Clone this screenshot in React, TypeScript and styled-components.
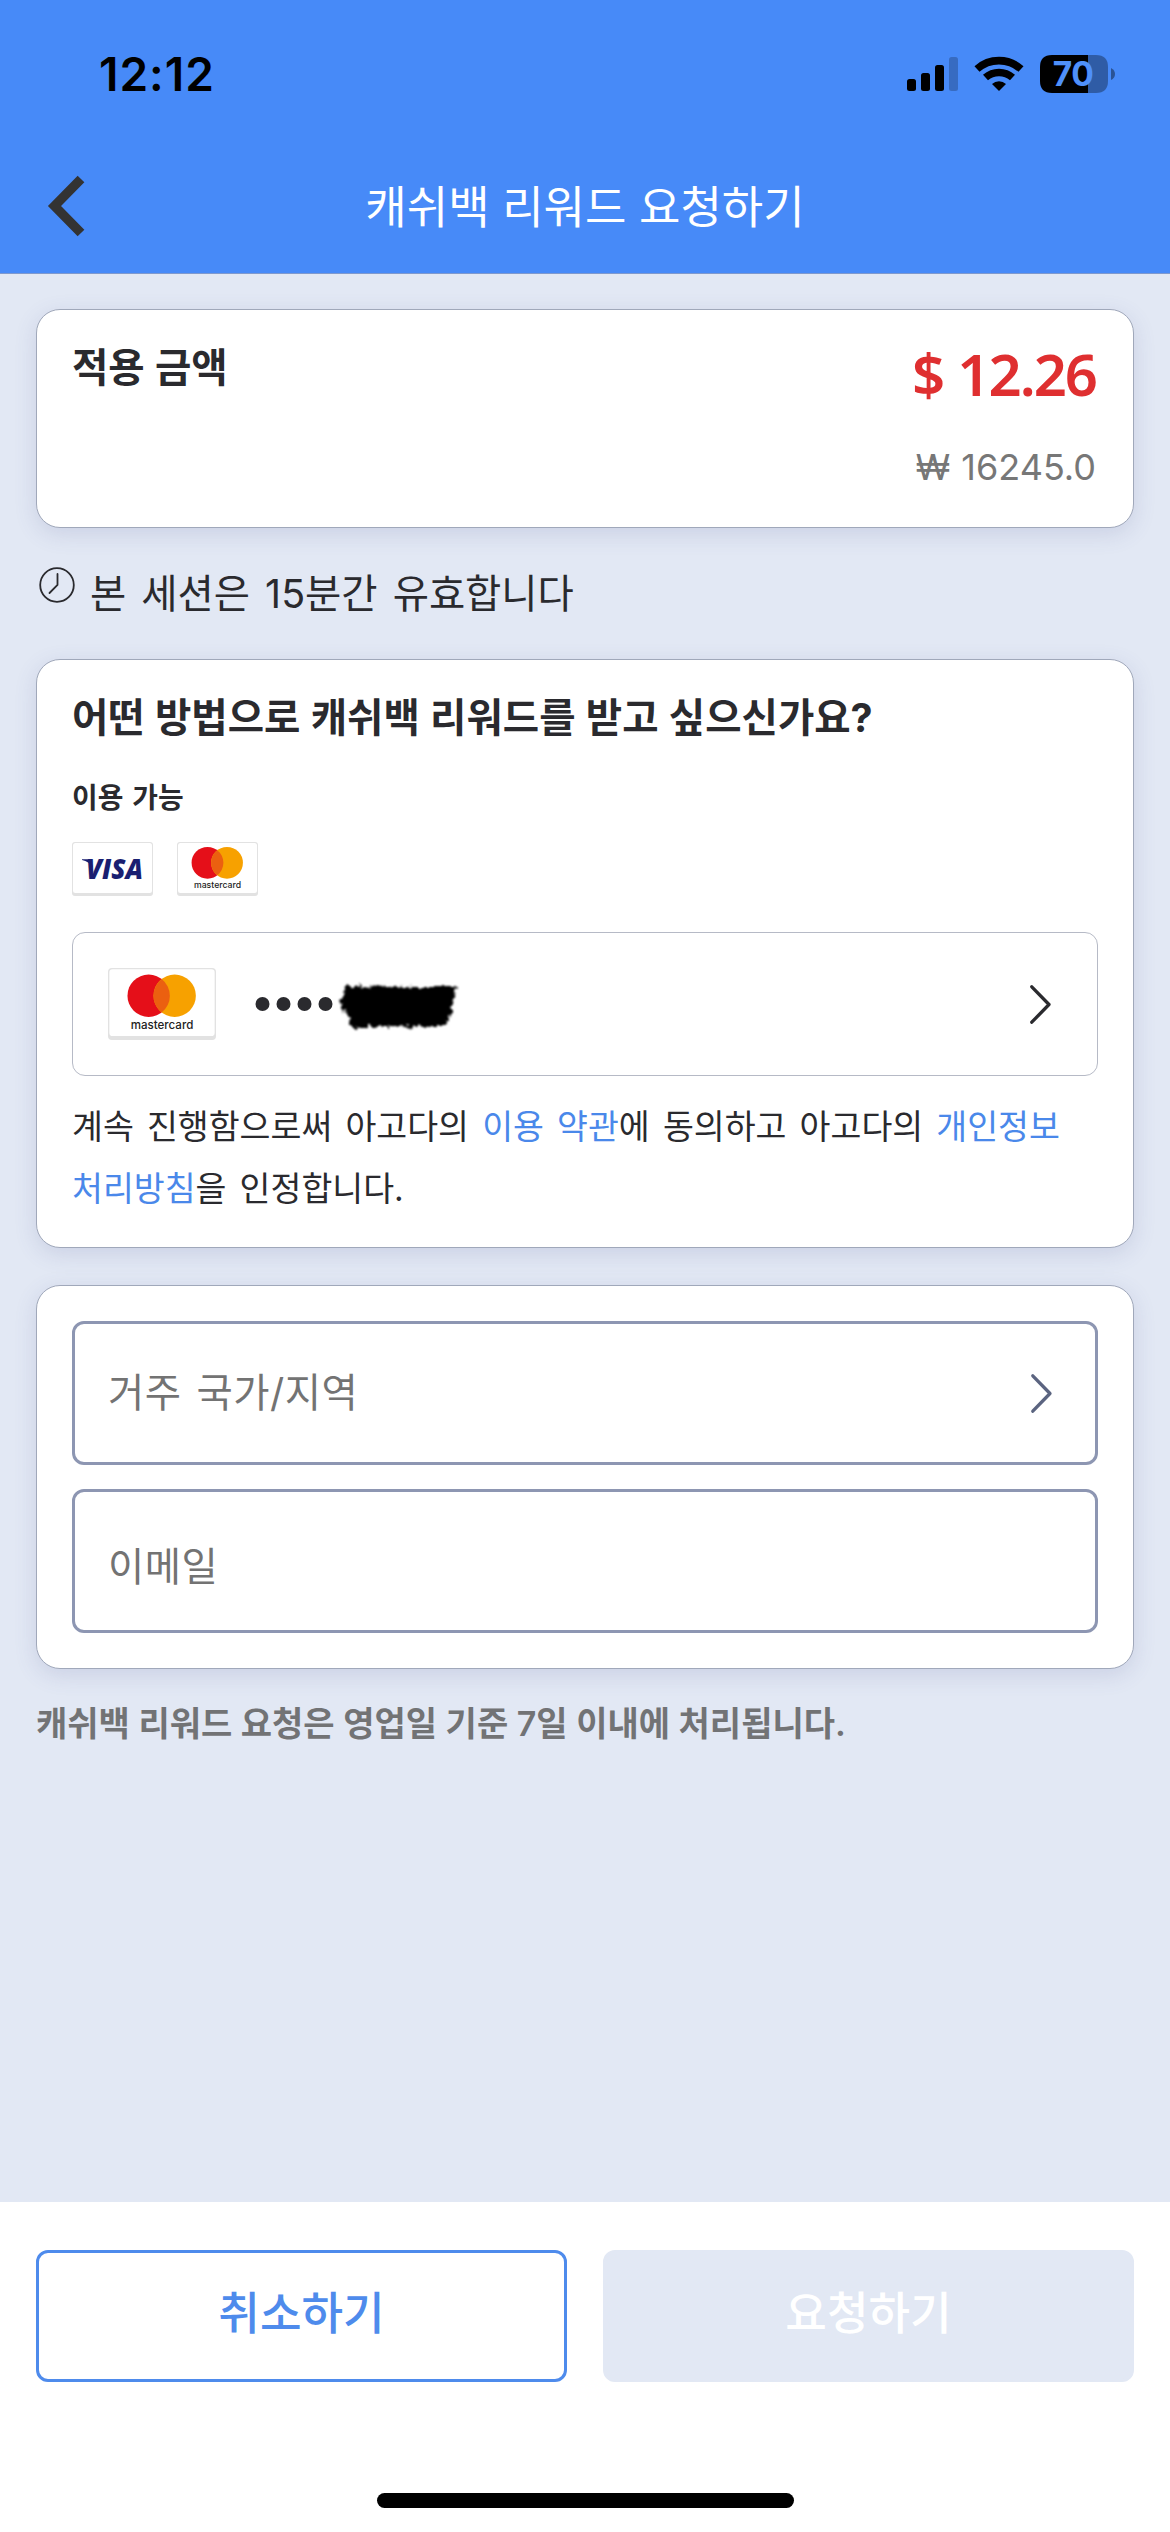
import React from 'react';
import styled, { createGlobalStyle } from 'styled-components';

const Global = createGlobalStyle`
  * { box-sizing: border-box; }
  body { margin: 0; background: #e2e8f4; }
  button, input { font: inherit; }
`;

const Screen = styled.div`
  width: 1170px;
  height: 2532px;
  display: flex;
  flex-direction: column;
  overflow: hidden;
  background: #e2e8f4;
  color: #2a2a2e;
  font-family: Inter, 'Noto Sans CJK KR', sans-serif;
`;

const Header = styled.header`
  height: 274px;
  background: #478af8;
  border-bottom: 1px solid #7f99cd;
  flex: none;
`;

const StatusBar = styled.div`
  height: 148px;
  padding: 0 55px 0 99px;
  display: flex;
  align-items: center;
  justify-content: space-between;
`;

const Clock = styled.div`
  font-size: 46px;
  font-weight: 600;
  line-height: 60px;
  letter-spacing: 1px;
  color: #000;
`;

const NavBar = styled.div`
  height: 118px;
  padding: 0 48px;
  display: grid;
  grid-template-columns: 37px 1fr 37px;
  align-items: center;
`;

const BackButton = styled.button`
  width: 37px;
  height: 62px;
  margin-bottom: 3px;
  padding: 0;
  border: 0;
  background: none;
  display: flex;
`;

const PageTitle = styled.h1`
  margin: 1px 0 0;
  text-align: center;
  color: #fff;
  font-size: 45px;
  font-weight: 400;
  line-height: 60px;
`;

const Content = styled.main`
  flex: 1;
  padding: 35px 36px 0;
`;

const Card = styled.section<{ $height: number }>`
  height: ${(p) => p.$height}px;
  padding: 35px;
  border: 1px solid #a0a8ba;
  border-radius: 24px;
  background: #fff;
  box-shadow: 0 6px 22px rgba(80, 90, 150, 0.16);
`;

const AmountCard = styled(Card)`
  display: flex;
  justify-content: space-between;
`;

const FormCard = styled(Card)`
  margin-top: 37px;
`;

const Heading = styled.h2`
  margin: 0;
  font-size: 39.5px;
  font-weight: 700;
  line-height: 46px;
  word-spacing: 1px;
  white-space: nowrap;
`;

const Amounts = styled.div`
  padding-right: 2px;
  text-align: right;
`;

const Dollars = styled.div`
  margin-top: -2px;
  font-family: 'Noto Sans', sans-serif;
  font-size: 58px;
  font-weight: 600;
  line-height: 62px;
  letter-spacing: -2px;
  word-spacing: 1px;
  color: #df2f30;
`;

const Won = styled.div`
  margin-top: 40px;
  font-size: 36px;
  font-weight: 400;
  line-height: 44px;
  word-spacing: 1px;
  color: #777;
`;

const Session = styled.div`
  height: 131px;
  padding: 38px 0 0 3px;
  display: flex;
  gap: 14px;
`;

const SessionText = styled.p`
  margin: 1px 0 0;
  font-size: 39.4px;
  line-height: 54px;
  word-spacing: 4px;
  white-space: nowrap;
`;

const SubHeading = styled.h3`
  margin: 39px 0 0;
  font-size: 27.9px;
  font-weight: 600;
  line-height: 36px;
  word-spacing: 2px;
`;

const Logos = styled.div`
  margin-top: 26px;
  display: flex;
  gap: 24px;
`;

const MethodRow = styled.button`
  margin-top: 36px;
  width: 100%;
  height: 144px;
  padding: 0 46px 0 35px;
  border: 1px solid #b6bac6;
  border-radius: 13px;
  background: #fff;
  display: flex;
  align-items: center;
`;

const CardNumber = styled.span`
  margin: 6px 0 0 39px;
  flex: 1;
  display: flex;
  align-items: center;
`;

const Terms = styled.p`
  margin: 20px 0 0;
  font-size: 33.6px;
  line-height: 62px;
  word-spacing: 3.7px;
  white-space: nowrap;
`;

const Link = styled.a`
  color: #4a88ea;
`;

const Field = styled.div<{ $drop?: number }>`
  height: 144px;
  padding: ${(p) => p.$drop ?? 0}px 43px 0 33px;
  border: 3px solid #8d96b2;
  border-radius: 12px;
  display: flex;
  align-items: center;
  justify-content: space-between;
  font-size: 39.4px;
  line-height: 52px;
  letter-spacing: 0.5px;
  word-spacing: 3.5px;
  color: #737373;
  & + & { margin-top: 24px; }
`;

const Notice = styled.p`
  margin: 28px 0 0;
  font-size: 34px;
  font-weight: 600;
  line-height: 54px;
  color: #727375;
  white-space: nowrap;
`;

const Footer = styled.footer`
  height: 330px;
  flex: none;
  padding: 48px 36px 24px;
  display: flex;
  flex-direction: column;
  justify-content: space-between;
  background: #fff;
`;

const Actions = styled.div`
  display: grid;
  grid-template-columns: 1fr 1fr;
  gap: 36px;
`;

const Action = styled.button<{ $muted?: boolean }>`
  height: 132px;
  padding: 0 0 4px;
  border: 3px solid ${(p) => (p.$muted ? '#e2e8f4' : '#4e8bec')};
  border-radius: 12px;
  background: ${(p) => (p.$muted ? '#e2e8f4' : '#fff')};
  color: ${(p) => (p.$muted ? '#fff' : '#4e8bec')};
  font-size: 45.2px;
  font-weight: 500;
  line-height: 60px;
`;

const HomeIndicator = styled.div`
  width: 417px;
  height: 15px;
  border-radius: 8px;
  background: #000;
  align-self: center;
`;

const Svg = styled.svg`
  display: block;
  flex: none;
  overflow: visible;
`;

const StatusIcons = () => (
  <Svg width="208" height="38" viewBox="907 55 208 38">
    <rect x="907" y="79" width="9" height="12" rx="2.5" />
    <rect x="921" y="73" width="9" height="18" rx="2.5" />
    <rect x="935" y="65" width="9" height="26" rx="2.5" />
    <rect x="949" y="57" width="9" height="34" rx="2.5" opacity=".22" />
    <g fill="none" stroke="#000" strokeWidth="7.6">
      <path d="M977 69 A33 33 0 0 1 1021 69" />
      <path d="M985.5 77.5 A20.5 20.5 0 0 1 1012.5 77.5" />
    </g>
    <path d="M992 84 A10.5 10.5 0 0 1 1006 84 L999 91 Z" />
    <path d="M1088 55 H1096 Q1108 55 1108 67 V81 Q1108 93 1096 93 H1088 Z" opacity=".33" />
    <path d="M1088 55 H1052 Q1040 55 1040 67 V81 Q1040 93 1052 93 H1088 Z" />
    <path d="M1111 68 Q1115 70 1115 74 Q1115 78 1111 80 Z" opacity=".4" />
    <text x="1073" y="86" textAnchor="middle" fontFamily="Inter, sans-serif" fontSize="33.5" fontWeight="700" fill="#4f90fa" letterSpacing="-.5">70</text>
  </Svg>
);

const BackIcon = () => (
  <Svg width="37" height="62" viewBox="0 0 37 62">
    <path d="M33 4 L6.5 31 L33 58" fill="none" stroke="#333" strokeWidth="9.4" />
  </Svg>
);

const ClockIcon = () => (
  <Svg width="37" height="37" viewBox="0 0 37 37">
    <g fill="none" stroke="#2a2a2e" strokeWidth="1.8" strokeLinecap="round">
      <circle cx="18" cy="19" r="16.8" />
      <path d="M18.5 8 V19 L10.5 27" />
    </g>
  </Svg>
);

const Chevron = ({ color }: { color: string }) => (
  <Svg width="21" height="39" viewBox="0 0 21 39">
    <path d="M1.8 1.8 L19 19.5 L1.8 37.2" fill="none" stroke={color} strokeWidth="3.3" strokeLinecap="round" strokeLinejoin="round" />
  </Svg>
);

const Plate = () => (
  <>
    <rect width="81" height="54" rx="3" fill="#e2e2e2" />
    <rect x="1" y="1" width="79" height="50" rx="2.5" fill="#fff" />
  </>
);

const VisaLogo = () => (
  <Svg width="81" height="54" viewBox="0 0 81 54">
    <Plate />
    <text x="14" y="36.8" fontFamily="'Open Sans', sans-serif" fontSize="27.5" fontWeight="800" fontStyle="italic" textLength="57" lengthAdjust="spacingAndGlyphs" fill="#1a1f71">VISA</text>
    <path d="M10 17.2 H19 L20.5 25 Q17 19.5 10 18 Z" fill="#1a1f71" />
  </Svg>
);

const MastercardLogo = ({ width = 81 }: { width?: number }) => (
  <Svg width={width} height={(width * 54) / 81} viewBox="0 0 81 54">
    <Plate />
    <circle cx="30.5" cy="20.8" r="15.9" fill="#e50f19" />
    <circle cx="50" cy="20.8" r="15.9" fill="#f7a100" />
    <path d="M40.25 8.24 A15.9 15.9 0 0 1 40.25 33.36 A15.9 15.9 0 0 1 40.25 8.24 Z" fill="#eb6010" />
    <text x="40.5" y="45.8" textAnchor="middle" fontFamily="Inter, sans-serif" fontSize="9" fontWeight="500" textLength="47" lengthAdjust="spacingAndGlyphs" fill="#222">mastercard</text>
  </Svg>
);

const MaskedNumber = () => (
  <Svg width="200" height="48" viewBox="255 984 200 48">
    <defs>
      <filter id="rough" x="-10%" y="-20%" width="120%" height="140%">
        <feTurbulence type="fractalNoise" baseFrequency="0.22" numOctaves="2" seed="4" />
        <feDisplacementMap in="SourceGraphic" scale="9" xChannelSelector="R" yChannelSelector="G" />
        <feGaussianBlur stdDeviation="1.1" />
      </filter>
    </defs>
    <g fill="#2a2a2e">
      <circle cx="262.5" cy="1005" r="7" />
      <circle cx="283.5" cy="1005" r="7" />
      <circle cx="304.5" cy="1005" r="7" />
      <circle cx="325.5" cy="1005" r="7" />
    </g>
    <path d="M346 987 L420 988 L455 988 L453 1005 L448 1022 L438 1028 L385 1027 L352 1029 L348 1018 L340 1005 Z" filter="url(#rough)" />
  </Svg>
);

export default function App() {
  return (
    <Screen>
      <Global />
      <Header>
        <StatusBar>
          <Clock>12:12</Clock>
          <StatusIcons />
        </StatusBar>
        <NavBar>
          <BackButton aria-label="뒤로"><BackIcon /></BackButton>
          <PageTitle>캐쉬백 리워드 요청하기</PageTitle>
        </NavBar>
      </Header>
      <Content>
        <AmountCard $height={219}>
          <Heading>적용 금액</Heading>
          <Amounts>
            <Dollars>$ 12.26</Dollars>
            <Won>₩ 16245.0</Won>
          </Amounts>
        </AmountCard>
        <Session>
          <ClockIcon />
          <SessionText>본 세션은 15분간 유효합니다</SessionText>
        </Session>
        <Card $height={589}>
          <Heading>어떤 방법으로 캐쉬백 리워드를 받고 싶으신가요?</Heading>
          <SubHeading>이용 가능</SubHeading>
          <Logos>
            <VisaLogo />
            <MastercardLogo />
          </Logos>
          <MethodRow>
            <MastercardLogo width={108} />
            <CardNumber><MaskedNumber /></CardNumber>
            <Chevron color="#2a2a2e" />
          </MethodRow>
          <Terms>
            계속 진행함으로써 아고다의 <Link>이용 약관</Link>에 동의하고 아고다의 <Link>개인정보<br />처리방침</Link>을 인정합니다.
          </Terms>
        </Card>
        <FormCard $height={384}>
          <Field>거주 국가/지역<Chevron color="#5b6480" /></Field>
          <Field $drop={12}>이메일</Field>
        </FormCard>
        <Notice>캐쉬백 리워드 요청은 영업일 기준 7일 이내에 처리됩니다.</Notice>
      </Content>
      <Footer>
        <Actions>
          <Action>취소하기</Action>
          <Action $muted>요청하기</Action>
        </Actions>
        <HomeIndicator />
      </Footer>
    </Screen>
  );
}
